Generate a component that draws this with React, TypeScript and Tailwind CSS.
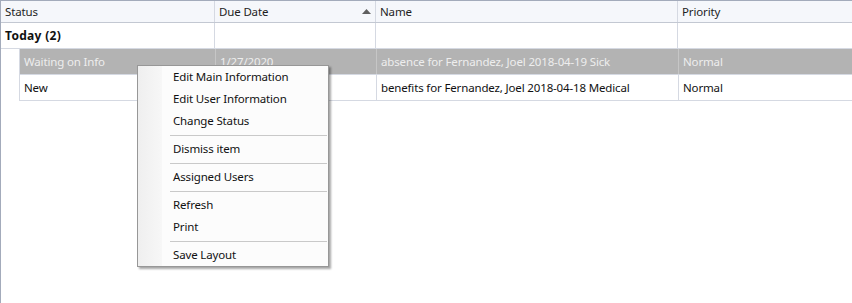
import React from "react";

const font = { fontFamily: '"Noto Sans", "Open Sans", sans-serif' };

function HeaderCell({ w, label, arrow, last }: { w: string; label: string; arrow?: boolean; last?: boolean }) {
  return (
    <div className={`${w} relative flex items-center pl-[4px] ${last ? "" : "border-r border-[#d5d9e2]"} text-[11.5px] tracking-[-0.15px] text-[#1e1e1e]`}>
      <span>{label}</span>
      {arrow && (
        <svg className="absolute right-[4px] top-[8px]" width="9" height="5" viewBox="0 0 9 5">
          <polygon points="0,5 9,5 4.5,0" fill="#5f5f5f" />
        </svg>
      )}
    </div>
  );
}

function DataRow({ status, date, name, prio, selected }: { status: string; date: string; name: string; prio: string; selected?: boolean }) {
  const txt = selected ? "text-[#eeeeee]" : "text-[#111111]";
  const bg = selected ? "bg-[#b3b3b3]" : "bg-white";
  const sep = selected ? "border-[#c6c6c6]" : "border-[#d5d9e2]";
  return (
    <div className="flex h-[26px]">
      <div className="w-[18px] shrink-0 bg-white" />
      <div className={`flex flex-1 border-l border-b border-[#d5d9e2] ${bg} ${txt} text-[11.5px] tracking-[-0.15px]`}>
        <div className={`w-[196px] flex items-center pl-[4px] border-r ${sep}`}>{status}</div>
        <div className={`w-[161px] flex items-center pl-[4px] border-r ${sep}`}>{date}</div>
        <div className={`w-[302px] flex items-center pl-[4px] border-r ${sep}`}>{name}</div>
        <div className="flex-1 flex items-center pl-[4px]">{prio}</div>
      </div>
    </div>
  );
}

function MenuItem({ label }: { label: string }) {
  return (
    <div className="h-[22px] flex items-center pl-[35px] text-[11.5px] tracking-[-0.15px] text-[#111111]">{label}</div>
  );
}

function Sep() {
  return (
    <div className="h-[6px] flex items-center pl-[32px] pr-[1px]">
      <div className="h-px w-full bg-[#c9c9c9]" />
    </div>
  );
}

export default function App() {
  return (
    <div className="w-[852px] h-[303px] bg-white relative overflow-hidden border-l border-t border-[#a3abbb]" style={font}>
      <div className="flex h-[22px] bg-[#f5f7fb] border-b border-[#c3c8d2]">
        <HeaderCell w="w-[214px]" label="Status" />
        <HeaderCell w="w-[161px]" label="Due Date" arrow />
        <HeaderCell w="w-[302px]" label="Name" />
        <HeaderCell w="flex-1" label="Priority" last />
      </div>
      <div className="flex h-[26px] border-b border-[#d5d9e2] text-[12px]">
        <div className="w-[214px] flex items-center pl-[4px] border-r border-[#d5d9e2] font-bold text-[#111111] tracking-[0.3px]">Today (2)</div>
        <div className="w-[161px] border-r border-[#d5d9e2]" />
        <div className="w-[302px] border-r border-[#d5d9e2]" />
        <div className="flex-1" />
      </div>
      <DataRow selected status="Waiting on Info" date="1/27/2020" name="absence for Fernandez, Joel 2018-04-19 Sick" prio="Normal" />
      <DataRow status="New" date="1/27/2020" name="benefits for Fernandez, Joel 2018-04-18 Medical" prio="Normal" />

      <div className="absolute left-[136px] top-[64px] w-[192px] border border-[#979797] bg-[#fcfcfc] shadow-[2px_2px_2px_rgba(0,0,0,0.35)]">
        <div className="absolute left-0 top-0 bottom-0 w-[24px] bg-gradient-to-r from-[#efefef] to-[#f7f7f7]" />
        <div className="relative">
          <MenuItem label="Edit Main Information" />
          <MenuItem label="Edit User Information" />
          <MenuItem label="Change Status" />
          <Sep />
          <MenuItem label="Dismiss item" />
          <Sep />
          <MenuItem label="Assigned Users" />
          <Sep />
          <MenuItem label="Refresh" />
          <MenuItem label="Print" />
          <Sep />
          <MenuItem label="Save Layout" />
        </div>
      </div>
    </div>
  );
}
